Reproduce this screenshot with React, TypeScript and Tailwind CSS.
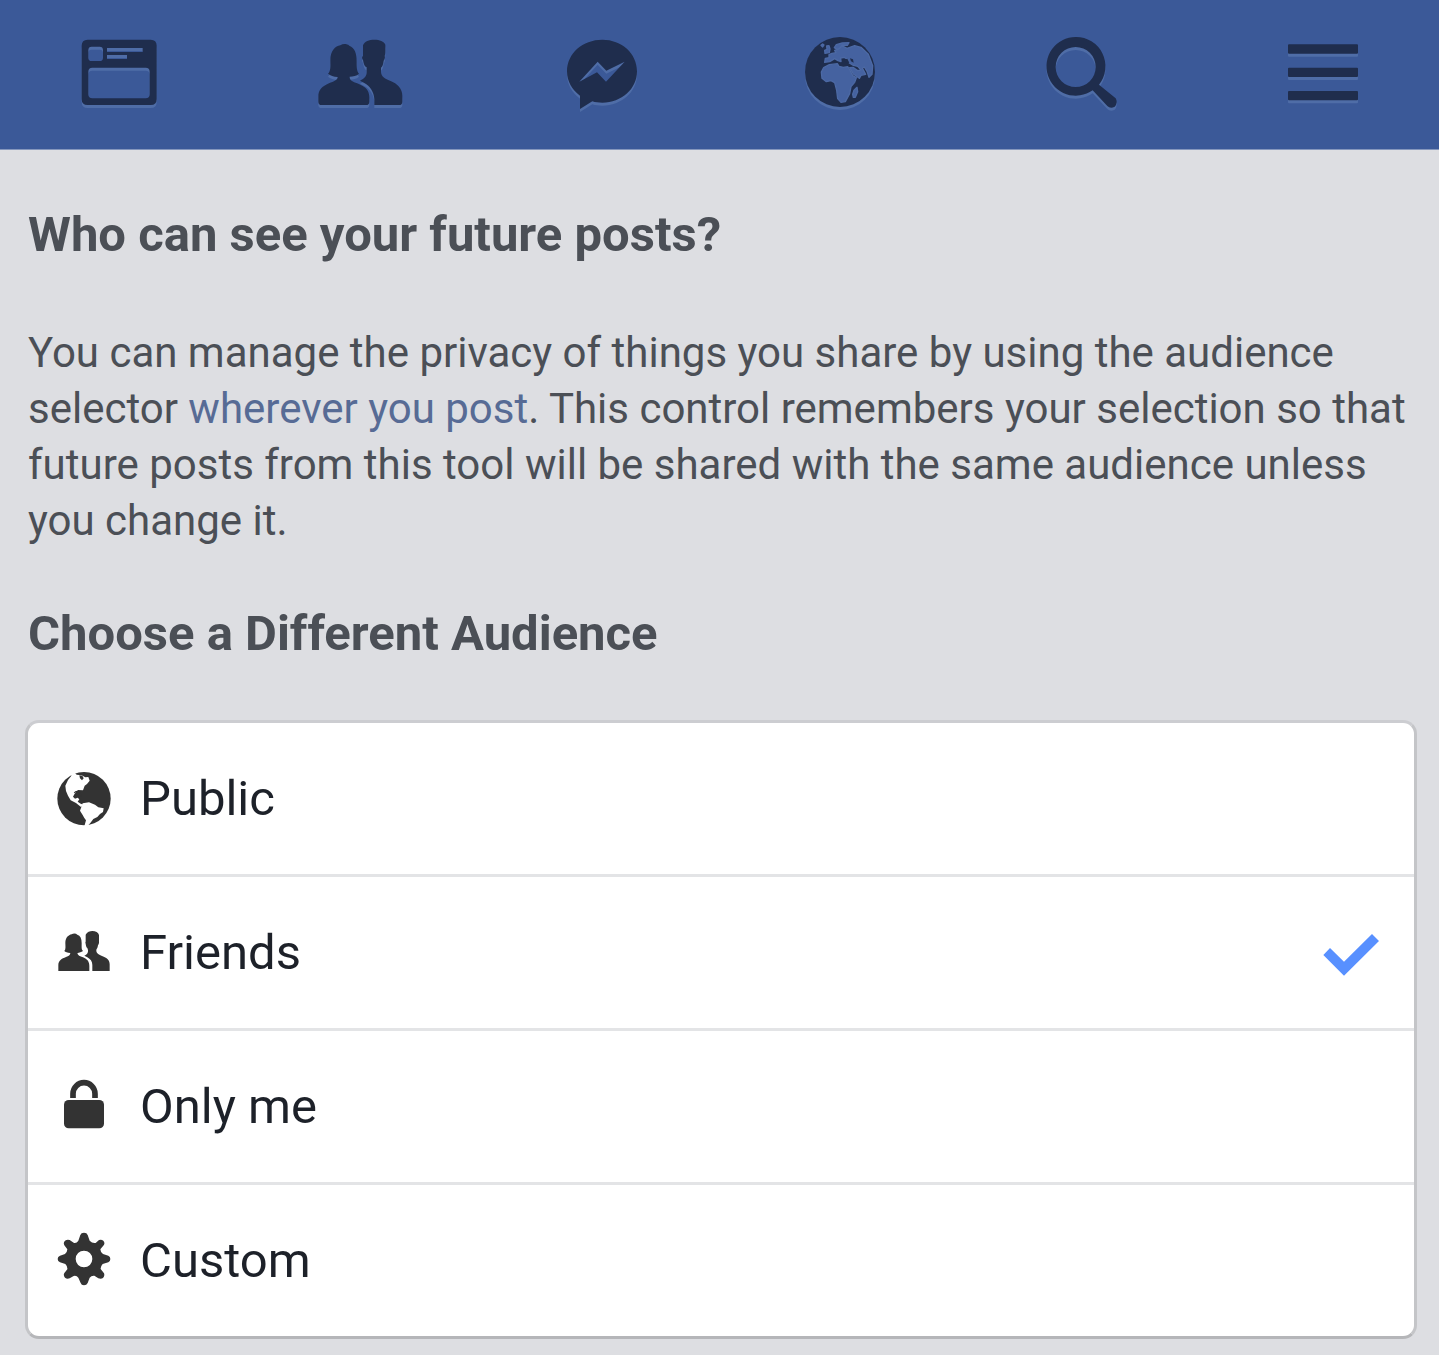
import type { ReactNode } from 'react'

const NEWS = 'M53 35H242Q260 35 260 53V213Q260 231 242 231H53Q35 231 35 213V53Q35 35 53 35ZM65 56Q55 56 55 66V89Q55 99 65 99H89Q99 99 99 89V66Q99 56 89 56ZM111 60V72H218V60ZM111 81V93H171V81ZM67 119Q55 119 55 131V199Q55 211 67 211H227Q239 211 239 199V131Q239 119 227 119Z'

const FRIENDS = 'M193 231V213C192 192 180 174 163 165L150 158C164 151 170 144 170 132V118C164 116 161 108 159 96C156 92 155 86 159 84V52C164 40 177 35 193 35C209 35 222 40 226 50V69C226 78 225 82 224 84C226 88 224 94 221 98C220 108 217 116 213 119V132C214 147 226 153 240 158C263 167 277 181 277 204V221Q277 231 267 231ZM25 221V206C25 186 36 175 57 166C72 160 83 156 83 147C71 146 61 143 54 137C63 129 61 114 61 98C61 67 76 55 91 52C99 47 110 47 118 53C134 59 140 76 140 100C140 118 140 130 147 137C140 144 129 145 119 146C118 158 130 161 145 167C167 176 178 187 178 208V221Q178 231 168 231H35Q25 231 25 221Z'

const MESSENGER = 'M142 35C83 35 36 76 36 130C36 160 51 186 75 203V243L112 220C121 223 131 224 142 224C200 224 246 183 246 130C246 76 200 35 142 35ZM73 161L128 101L154 128L209 101L153 161L126 133Z'

const SEARCH = 'M119 27A88 88 0 1 0 170 187L214 234Q223 243 236 236Q247 224 239 211L189 170A88 88 0 0 0 119 27ZM119 57A60 60 0 1 1 119 177A60 60 0 1 1 119 57Z'

const MENU = 'M42 49H246Q249 49 249 52V74Q249 77 246 77H42Q39 77 39 74V52Q39 49 42 49ZM42 119H246Q249 119 249 122V144Q249 147 246 147H42Q39 147 39 144V122Q39 119 42 119ZM42 189H246Q249 189 249 192V214Q249 217 246 217H42Q39 217 39 214V192Q39 189 42 189Z'

const GLOBE_LAND = [
  // Africa
  'M103 110L127 107L132 115L145 118L158 116L164 125L173 143L184 149L179 163L168 176L164 197L151 221L138 223L128 212L125 187L119 164L108 158L94 161L81 151L79 132L86 119Z',
  // Madagascar
  'M186 178L188 191L181 208L175 208L173 199L177 187Z',
  // Europe
  'M89 103L91 91L102 89L102 80L111 76L123 74L119 67L131 63L134 57L143 54L156 61L179 53L198 58L220 79L233 113L231 139L222 148L216 130L208 117L202 120L212 139L198 142L193 151L175 138L164 119L174 118L188 128L198 126L188 115L173 111L163 105L158 94L148 88L137 90L138 101L129 98L119 92L104 101Z',
  // British Isles and Scandinavia
  'M90 76L89 67L96 64L95 54L102 53L105 63L103 74Z',
  'M118 59L124 50L142 45L162 44L157 52L141 51L136 59L127 65Z',
  'M78 52L83 48L87 51L83 57Z',
]

const PEOPLE_SMALL = 'M142 168V150C142 139 136 132 127 127L118 122C126 118 130 114 129 105L127 99C124 98 123 92 122 87L121 81L122 80V59C126 51 135 48 142 48C152 48 160 52 162 60V78C163 84 161 88 159 91C158 98 156 101 154 104V109C155 116 162 120 171 123C186 128 194 135 194 148V168ZM40 168V150C40 137 50 131 63 126C71 123 76 120 76 114C67 113 61 111 58 108C63 103 61 93 61 84C61 68 70 60 80 58C85 55 93 55 97 59C106 62 110 70 110 84C110 97 109 103 114 108C109 112 103 113 97 114C98 121 105 124 114 127C127 133 133 139 133 153V168Z'

function NavIcon({ label, viewBox, path }: { label: string; viewBox: string; path: string }) {
  return (
    <svg aria-label={label} className="h-[90px] w-[100px]" viewBox={viewBox} fillRule="evenodd">
      <path d={path} fill="#4f6da7" transform="translate(0 9)" />
      <path d={path} fill="#1f2d4d" />
    </svg>
  )
}

function NavGlobe() {
  return (
    <svg aria-label="Notifications" className="h-[90px] w-[100px]" viewBox="-15 0 300 270">
      <circle cx="135" cy="141" r="105" fill="#4f6da7" />
      <circle cx="135" cy="132" r="105" fill="#1f2d4d" />
      <g fill="#4562a0" stroke="#4c69a4" strokeWidth="4" strokeLinejoin="round">
        {GLOBE_LAND.map((d) => <path key={d} d={d} />)}
      </g>
      <path d="M147 96L157 92L163 104L155 106ZM165 91L174 94L176 104L168 100Z" fill="#1f2d4d" />
    </svg>
  )
}

function PublicIcon() {
  return (
    <svg className="h-[80px] w-[80px]" viewBox="0 0 240 240">
      <circle cx="117" cy="119" r="80" fill="#333" />
      <path fill="#fff" d="M84 36L95 47L110 49L121 55L130 54L134 65L126 75L119 80L114 94L99 93L89 104L84 113L90 119L98 116L103 121L98 128L107 134L116 137L108 144L93 132L77 124L69 110L63 96L61 80L69 63L78 52Z" />
      <path fill="#fff" d="M113 133L132 130L150 137L160 145L176 148L174 159L165 165L157 174L145 180L136 192L127 202L118 202L123 184L118 177L113 168L105 155Z" />
      <path fill="#333" d="M103 49L112 50L116 58L111 64L105 58Z" />
      <path fill="none" stroke="#333" strokeWidth="4" d="M88 102Q93 94 105 99L110 111" />
    </svg>
  )
}

function FriendsIcon() {
  return (
    <svg className="mb-[5px] h-[70px] w-[80px]" viewBox="0 0 240 210">
      <path d={PEOPLE_SMALL} fill="#333" />
    </svg>
  )
}

function LockIcon() {
  return (
    <svg className="mb-[3px] h-[70px] w-[80px]" viewBox="0 0 240 210">
      <path d="M84 84V71A33 33 0 0 1 150 71V84" fill="none" stroke="#333" strokeWidth="17" />
      <rect x="57" y="90" width="120" height="85" rx="14" fill="#333" />
    </svg>
  )
}

function GearIcon() {
  return (
    <svg className="mb-[2px] h-[80px] w-[80px]" viewBox="0 0 240 240">
      <path
        fill="#333"
        fillRule="evenodd"
        d="M106 45Q108 38 117 38Q126 38 128 45L134 62Q142 71 152 69L162 60Q169 57 175 62Q181 69 176 76L166 88Q166 96 174 102L190 107Q196 110 196 117Q196 124 190 127L173 132Q166 140 167 147L177 160Q180 168 174 174Q168 178 160 175L148 167Q139 166 134 173L128 189Q125 196 117 196Q109 196 107 189L100 173Q95 166 86 168L74 175Q66 178 60 173Q54 166 58 159L67 148Q68 139 61 132L45 127Q38 124 38 117Q38 110 45 107L60 102Q67 96 67 88L58 76Q54 68 60 62Q67 57 74 60L86 68Q94 71 100 62ZM117 92A25 25 0 1 0 117 142A25 25 0 1 0 117 92Z"
      />
    </svg>
  )
}

function Option({ label, icon, selected }: { label: string; icon: ReactNode; selected?: boolean }) {
  return (
    <li className="flex h-[154px] items-center border-b-[3px] border-[#e3e4e6] pl-[17px] pr-[26px] last:h-[151px] last:border-b-0">
      {icon}
      <span className="ml-[15px] grow text-[49px] leading-[56px] text-[#1d2129]">{label}</span>
      {selected && (
        <svg aria-label="Selected" className="h-[50px] w-[75px]" viewBox="0 0 225 150">
          <path d="M31 81L51 60L93 101L177 18L198 39L93 143Z" fill="#5890ff" />
        </svg>
      )}
    </li>
  )
}

export default function App() {
  return (
    <div className="h-[1355px] w-[1439px] overflow-hidden bg-[#dddee2] font-['Roboto',sans-serif] text-[#4b4f56]">
      <header className="flex h-[150px] border-b border-[#8597bd] bg-[#3b5998] pt-[28px] *:mx-[70px] *:shrink-0">
        <NavIcon label="News Feed" viewBox="0 0 300 270" path={NEWS} />
        <NavIcon label="Friend Requests" viewBox="0 0 300 270" path={FRIENDS} />
        <NavIcon label="Messages" viewBox="-15 0 300 270" path={MESSENGER} />
        <NavGlobe />
        <NavIcon label="Search" viewBox="-18 0 300 270" path={SEARCH} />
        <NavIcon label="Menu" viewBox="-15 0 300 270" path={MENU} />
      </header>

      <main className="px-[28px] pt-[57px]">
        <h1 className="text-[49px] font-bold leading-[56px]">Who can see your future posts?</h1>
        <p className="mt-[62px] whitespace-nowrap text-[42px] leading-[56px]">
          You can manage the privacy of things you share by using the audience<br />
          selector <a className="text-[#576b95]">wherever you post</a>. This control remembers your selection so that<br />
          future posts from this tool will be shared with the same audience unless<br />
          you change it.
        </p>
        <h2 className="mt-[57px] text-[49px] font-bold leading-[56px]">Choose a Different Audience</h2>
        <ul className="-mx-[3px] mt-[58px] w-[1392px] rounded-[14px] border-[3px] border-t-[#cccdd1] border-r-[#c4c5c8] border-b-[#b5b6b9] border-l-[#c4c5c8] bg-white">
          <Option label="Public" icon={<PublicIcon />} />
          <Option label="Friends" icon={<FriendsIcon />} selected />
          <Option label="Only me" icon={<LockIcon />} />
          <Option label="Custom" icon={<GearIcon />} />
        </ul>
      </main>
    </div>
  )
}
